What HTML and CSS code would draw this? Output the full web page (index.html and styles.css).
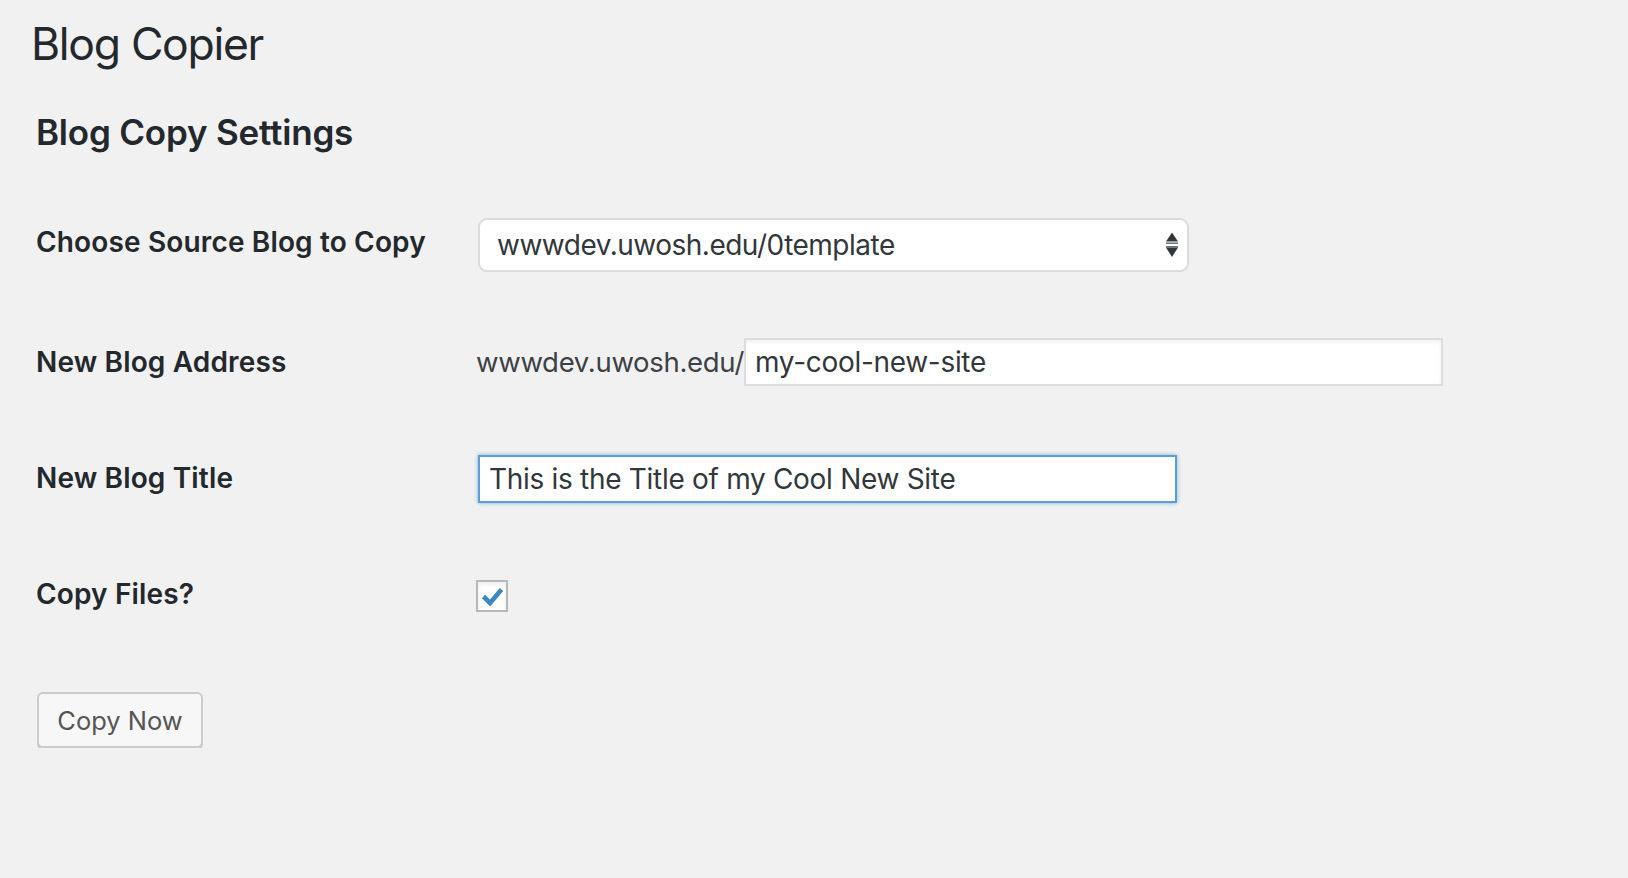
FILE: index.html
```html
<!DOCTYPE html>
<html lang="en">
<head>
<meta charset="utf-8">
<title>Blog Copier</title>
<link rel="stylesheet" href="styles.css">
</head>
<body>
<div class="wrap">
  <h1 class="page-title">Blog Copier</h1>
  <h2 class="section-title">Blog Copy Settings</h2>
  <div class="form">
    <div class="row">
      <div class="label label-up3">Choose Source Blog to Copy</div>
      <div class="field">
        <div class="select">
          <span class="select-value">wwwdev.uwosh.edu/0template</span>
          <svg class="select-arrows" width="14" height="26" viewBox="0 0 14 26">
            <path d="M1 9.5 L7 0.5 L13 9.5 Z" fill="#32373c"/>
            <rect x="1" y="10.5" width="12" height="1.5" fill="#6b7075"/>
            <rect x="1" y="14" width="12" height="1.5" fill="#6b7075"/>
            <path d="M1 15.5 L13 15.5 L7 25 Z" fill="#32373c"/>
          </svg>
        </div>
      </div>
    </div>
    <div class="row">
      <div class="label">New Blog Address</div>
      <div class="field address">
        <span class="prefix">wwwdev.uwosh.edu/</span>
        <input class="text-input address-input" type="text" value="my-cool-new-site">
      </div>
    </div>
    <div class="row">
      <div class="label label-up1">New Blog Title</div>
      <div class="field">
        <input class="text-input title-input" type="text" value="This is the Title of my Cool New Site">
      </div>
    </div>
    <div class="row">
      <div class="label label-up2">Copy Files?</div>
      <div class="field">
        <div class="checkbox">
          <svg width="28" height="28" viewBox="0 0 28 28">
            <path d="M5.5 14.5 L12 21 L23.5 7.5" fill="none" stroke="#3d88c3" stroke-width="4.6" stroke-linecap="butt" stroke-linejoin="miter"/>
          </svg>
        </div>
      </div>
    </div>
  </div>
  <button class="button" type="button">Copy Now</button>
</div>
</body>
</html>
```

FILE: styles.css
```css
html, body {
  margin: 0;
  padding: 0;
}

body {
  background: #f1f1f1;
  color: #23282d;
  font-family: "Inter", "Liberation Sans", sans-serif;
}

.wrap {
  padding-left: 34px;
}

.page-title {
  margin: 16px 0 0 -3px;
  font-size: 44.5px;
  line-height: 56px;
  font-weight: 400;
  letter-spacing: -1.3px;
  color: #23282d;
}

.section-title {
  margin: 38px 0 0 2px;
  font-size: 35px;
  line-height: 44px;
  font-weight: 600;
  letter-spacing: -0.2px;
  color: #23282d;
}

.form {
  margin-top: 32px;
}

.row {
  display: grid;
  grid-template-columns: 444px 1fr;
  align-items: center;
  height: 117px;
}

.label {
  font-size: 28px;
  font-weight: 600;
  letter-spacing: 0.15px;
  color: #23282d;
  padding-left: 2px;
}

.label-up1 {
  margin-top: -2px;
}

.label-up2 {
  margin-top: -4px;
}

.label-up3 {
  margin-top: -6px;
}

.field {
  display: flex;
  align-items: center;
}

.select {
  box-sizing: border-box;
  width: 711px;
  height: 54px;
  border: 2px solid #dcdcdc;
  border-radius: 9px;
  background: #fff;
  display: flex;
  align-items: center;
  justify-content: space-between;
  padding: 0 8px 0 17px;
  color: #32373c;
  font-size: 28px;
  letter-spacing: -0.5px;
}

.select-arrows {
  display: block;
}

.address {
  gap: 0;
  margin-left: -2px;
}

.prefix {
  font-size: 27.5px;
  letter-spacing: -0.3px;
  color: #3c4146;
}

.text-input {
  box-sizing: border-box;
  height: 48px;
  margin: 0;
  background: #fff;
  font-family: "Inter", "Liberation Sans", sans-serif;
  font-size: 28px;
  letter-spacing: -0.3px;
  color: #32373c;
  outline: none;
}

.address-input {
  width: 699px;
  border: 2px solid #dddddd;
  box-shadow: inset 0 2px 4px rgba(0, 0, 0, 0.06);
  padding: 0 9px;
}

.title-input {
  width: 699px;
  border: 2px solid #5b9dd9;
  box-shadow: 0 0 4px rgba(30, 140, 190, 0.6);
  padding: 0 9px;
}

.checkbox {
  box-sizing: border-box;
  width: 32px;
  height: 32px;
  margin-left: -2px;
  border: 2px solid #b4b9be;
  background: #fff;
  box-shadow: inset 0 2px 4px rgba(0, 0, 0, 0.08);
  display: flex;
  align-items: center;
  justify-content: center;
}

.checkbox svg {
  display: block;
}

.button {
  display: block;
  box-sizing: border-box;
  margin: 38px 0 0 3px;
  width: 166px;
  height: 56px;
  border: 2px solid #cccccc;
  border-radius: 6px;
  background: #f7f7f7;
  box-shadow: 0 2px 0 #cccccc;
  color: #555555;
  font-family: "Inter", "Liberation Sans", sans-serif;
  font-size: 25.5px;
  font-weight: 400;
  padding: 0;
}
```
